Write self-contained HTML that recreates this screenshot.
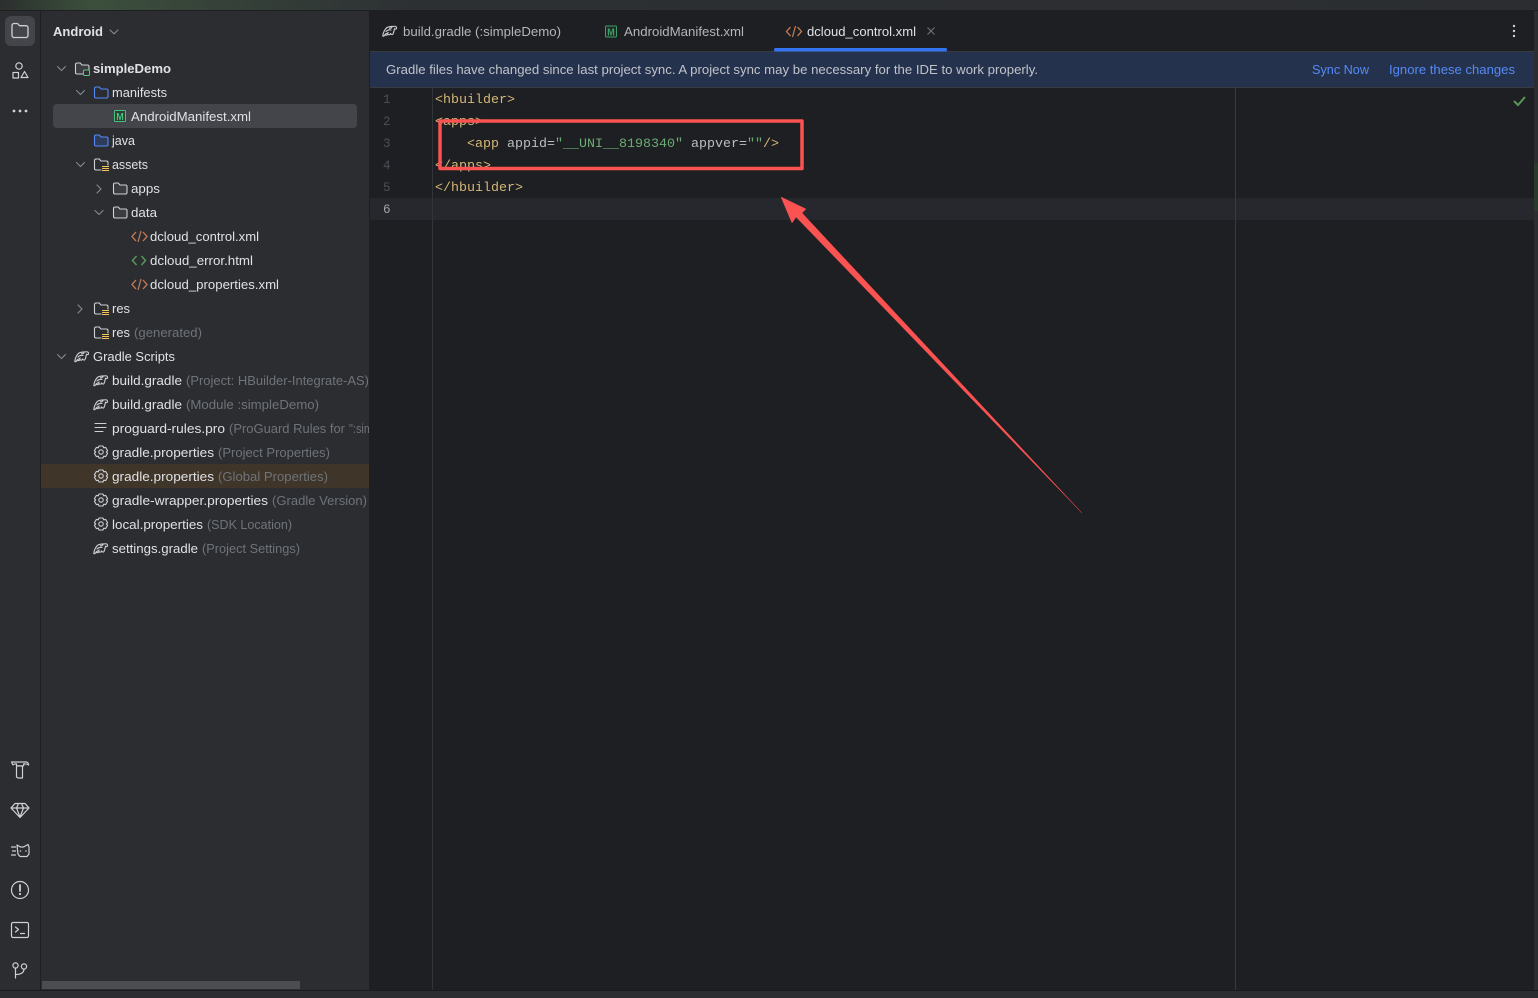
<!DOCTYPE html>
<html><head><meta charset="utf-8"><title>Android Studio</title>
<style>
html,body{margin:0;padding:0;background:#1e1f22;width:1538px;height:998px;overflow:hidden}
svg{display:block}
text{font-family:"Liberation Sans","Noto Sans CJK SC",sans-serif;font-size:13px;fill:#dfe1e5}
.g{fill:#6f737a}
.m{font-family:"Liberation Mono",monospace;font-size:13.33px}
.ic{fill:none;stroke:#ced0d6;stroke-width:1.1;stroke-linecap:round;stroke-linejoin:round}
.ln{fill:#4b5059;font-family:"Liberation Mono",monospace;font-size:12.5px}
.ch{fill:none;stroke:#868a91;stroke-width:1.1;stroke-linecap:round;stroke-linejoin:round}
</style></head><body>
<svg width="1538" height="998" viewBox="0 0 1538 998" xmlns="http://www.w3.org/2000/svg">
<defs>
<linearGradient id="top" x1="0" x2="1" y1="0" y2="0"><stop offset="0" stop-color="#2b2f2e"/><stop offset=".06" stop-color="#3c4f3c"/><stop offset=".14" stop-color="#364239"/><stop offset=".27" stop-color="#2d3033"/><stop offset="1" stop-color="#2b2d30"/></linearGradient>
<g id="fo"><path class="ic" style="stroke:#ced0d6;fill:#3a3c40" d="M.5 2.500a1.500 1.500 0 0 1 1.500-1.500h3.200l1.800 2h5.500a1.500 1.500 0 0 1 1.500 1.500v6a1.500 1.500 0 0 1-1.500 1.500H2a1.500 1.500 0 0 1-1.500-1.500z"/></g>
<g id="bf"><path style="fill:none;stroke:#548af7;stroke-width:1.1;stroke-linejoin:round" d="M.5 2.500a1.500 1.500 0 0 1 1.500-1.500h3.200l1.800 2h5.500a1.500 1.500 0 0 1 1.500 1.500v6a1.500 1.500 0 0 1-1.500 1.500H2a1.500 1.500 0 0 1-1.500-1.500z"/></g>
<g id="rf"><path class="ic" d="M7 12H2a1.500 1.500 0 0 1-1.500-1.500v-8A1.500 1.500 0 0 1 2 1h3.200l1.800 2h5.500A1.500 1.500 0 0 1 14 4.500V7"/><path d="M8 8.500h7M8 10.500h7M8 12.500h7" stroke="#f2c55c" stroke-width="1" fill="none"/></g>
<g id="el"><path class="ic" d="M.8 10.500C1 7 3 3.500 5 2 7 .8 10 1 12 .8c1.500-.2 2.800.4 2.500 2-.3 1-1.500 1-2 .4-.5 1.800-.5 3.300-1.500 5.300-.6 1-2 .5-2.300-.5-.7 1.500-2.200 1.500-2.700.5-.8 1.500-2.500 1.500-3 .5-.5 1.500-1.500 2-2.200 1.500z"/><path class="ic" d="M4 6c1.500-1.500 3-2 5-1.500M10 1.500c-.5 1-1.500 1.500-2.500 1.200M3.500 8.500c1-.3 2-.8 2.700-1.500"/></g>
<g id="ge"><circle class="ic" cx="7" cy="6.500" r="2.200"/><path class="ic" d="M5 .5h4l.7 1.800 1.900-.4 2 3.300-1.300 1.300 1.300 1.300-2 3.300-1.900-.4-.7 1.800H5l-.7-1.800-1.900.4-2-3.300L1.700 6.500.4 5.200l2-3.300 1.900.4z"/></g>
<g id="xml"><path d="M5 2.500 1 7l4 4.500M12 2.500 16 7l-4 4.500" fill="none" stroke="#c77d55" stroke-width="1.300"/><path d="M10 1.500 7 12.500" fill="none" stroke="#c77d55" stroke-width="1.200"/></g>
</defs>

<!-- base -->
<rect width="1538" height="998" fill="#1e1f22"/>
<rect width="1538" height="10" fill="url(#top)"/>
<rect y="10" width="1538" height="1" fill="#1e1f22"/>
<rect x="0" y="11" width="369" height="979" fill="#2b2d30"/>
<rect x="40" y="11" width="1" height="979" fill="#1e1f22"/>
<rect x="369" y="11" width="1" height="979" fill="#1e1f22"/>
<rect y="990" width="1538" height="8" fill="#2b2d30"/>
<rect y="990" width="1538" height="1" fill="#1a1b1e"/>
<rect x="1534" y="11" width="4" height="979" fill="#2b2d30"/>
<rect x="1534" y="163" width="4" height="48" fill="#2a3a2d"/>

<!-- left toolbar -->
<rect x="5" y="16" width="30" height="30" rx="6" fill="#43454a"/>
<path class="ic" style="stroke-width:1.300" d="M12 25.500a2 2 0 0 1 2-2h3.500l2 2.200h6.500a2 2 0 0 1 2 2v7.800a2 2 0 0 1-2 2H14a2 2 0 0 1-2-2z"/>
<circle class="ic" cx="19" cy="66" r="3.200" style="stroke-width:1.200"/>
<rect class="ic" x="13" y="72.500" width="5.500" height="5.500" style="stroke-width:1.200"/>
<path class="ic" style="stroke-width:1.200" d="M24.500 71.500l3.500 6h-7z"/>
<circle cx="14" cy="111" r="1.400" fill="#ced0d6"/><circle cx="20" cy="111" r="1.400" fill="#ced0d6"/><circle cx="26" cy="111" r="1.400" fill="#ced0d6"/>
<path class="ic" style="stroke-width:1.200" d="M11.500 762H26.500c1.200.3 2 1.500 2.200 3-1.500-1-3-1.200-5-1.200v2H16.500v-2c-1.500 0-3 .3-3.500 1.200zM16.500 766h6v12h-4.500l-1.500-1z"/>
<path class="ic" style="stroke-width:1.200" d="M15 803.500h10l4 4.500-9 9.500-9-9.500zM11 808h18M16.500 808l3.500 9 3.500-9M16.500 808l2-4.500h3l2 4.500"/>
<path class="ic" style="stroke-width:1.200" d="M17 845l3.500 2h3l4.500-2.500 1 2.500v7l-2 2.500h-7l-2-2.500zM11.500 847h4M12.500 851h3M11.500 855h4"/>
<circle cx="20.500" cy="851" r=".8" fill="#ced0d6"/><circle cx="26" cy="851" r=".8" fill="#ced0d6"/>
<circle class="ic" cx="20" cy="890" r="8.500" style="stroke-width:1.200"/>
<path d="M20 885v6" stroke="#ced0d6" stroke-width="1.800" stroke-linecap="round"/><circle cx="20" cy="894" r="1.100" fill="#ced0d6"/>
<rect class="ic" x="11.500" y="922.500" width="17" height="15" rx="1.500" style="stroke-width:1.200"/>
<path class="ic" style="stroke-width:1.200" d="M15.500 927l3 2.500-3 2.500M20.500 933.500h4"/>
<circle class="ic" cx="15.500" cy="965.500" r="2.600" style="stroke-width:1.200"/><circle class="ic" cx="24" cy="966.500" r="2.600" style="stroke-width:1.200"/>
<path class="ic" style="stroke-width:1.200" d="M15.500 968v10M15.500 974.500c4 0 8.500-1 8.500-5.500"/>

<!-- project panel -->
<text x="53" y="36" style="font-weight:700" textLength="50" lengthAdjust="spacingAndGlyphs">Android</text>
<path class="ch" d="M110 30l4 3.800 4-3.800"/>
<rect x="53" y="104" width="304" height="24" rx="4" fill="#43454a"/>
<rect x="41" y="464" width="328" height="24" fill="#3f3528"/>

<!-- chevrons -->
<path class="ch" d="M57.500 66.500l4 4 4-4"/><path class="ch" d="M76.500 90.500l4 4 4-4"/><path class="ch" d="M76.500 162.500l4 4 4-4"/>
<path class="ch" d="M97 185l4 4-4 4"/><path class="ch" d="M95 210.500l4 4 4-4"/><path class="ch" d="M78 305l4 4-4 4"/><path class="ch" d="M57.500 354.500l4 4 4-4"/>

<!-- tree icons -->
<use href="#fo" x="75" y="62"/><rect x="83.500" y="70" width="6" height="5.500" rx="1" fill="#2b2d30" stroke="#57c77f" stroke-width="1"/>
<use href="#bf" x="94" y="86"/>
<rect x="114.500" y="110.500" width="11" height="11" rx="1" fill="#2e3e36" stroke="#46c27b" stroke-width="1"/>
<text x="116.300" y="120" style="font-size:10px;font-weight:700;fill:#46c27b" textLength="7.500" lengthAdjust="spacingAndGlyphs">M</text>
<path style="fill:#2e3b5b;stroke:#548af7;stroke-width:1.100;stroke-linejoin:round" d="M94.500 136.500a1.500 1.500 0 0 1 1.500-1.500h3.200l1.800 2h5.500a1.500 1.500 0 0 1 1.500 1.500v6a1.500 1.500 0 0 1-1.500 1.500H96a1.500 1.500 0 0 1-1.500-1.500z"/>
<use href="#rf" x="94" y="158"/>
<use href="#fo" x="113" y="182"/><use href="#fo" x="113" y="206"/>
<use href="#xml" x="131" y="229.500"/>
<path d="M136.500 256 132.500 260.500l4 4.500M141.500 256l4 4.500-4 4.500" fill="none" stroke="#57965c" stroke-width="1.500"/>
<use href="#xml" x="131" y="277.500"/>
<use href="#rf" x="94" y="302"/><use href="#rf" x="94" y="326"/>
<use href="#el" x="74" y="351"/><use href="#el" x="93" y="375"/><use href="#el" x="93" y="399"/>
<path class="ic" d="M95 423.500h11M95 427.500h11M95 431.500h8"/>
<use href="#ge" x="94" y="445.500"/><use href="#ge" x="94" y="469.500"/><use href="#ge" x="94" y="493.500"/><use href="#ge" x="94" y="517.500"/>
<use href="#el" x="93" y="543"/>

<!-- tree text -->
<text x="93" y="73" style="font-weight:700" textLength="78" lengthAdjust="spacingAndGlyphs">simpleDemo</text>
<text x="112" y="97" textLength="55" lengthAdjust="spacingAndGlyphs">manifests</text>
<text x="131" y="121" textLength="120" lengthAdjust="spacingAndGlyphs">AndroidManifest.xml</text>
<text x="112" y="145" textLength="23" lengthAdjust="spacingAndGlyphs">java</text>
<text x="112" y="169" textLength="36" lengthAdjust="spacingAndGlyphs">assets</text>
<text x="131" y="193" textLength="29" lengthAdjust="spacingAndGlyphs">apps</text>
<text x="131" y="217" textLength="26" lengthAdjust="spacingAndGlyphs">data</text>
<text x="150" y="241" textLength="109" lengthAdjust="spacingAndGlyphs">dcloud_control.xml</text>
<text x="150" y="265" textLength="103" lengthAdjust="spacingAndGlyphs">dcloud_error.html</text>
<text x="150" y="289" textLength="129" lengthAdjust="spacingAndGlyphs">dcloud_properties.xml</text>
<text x="112" y="313" textLength="18" lengthAdjust="spacingAndGlyphs">res</text>
<text x="112" y="337" textLength="18" lengthAdjust="spacingAndGlyphs">res</text>
<text x="134" y="337" class="g" textLength="68" lengthAdjust="spacingAndGlyphs">(generated)</text>
<text x="93" y="361" textLength="82" lengthAdjust="spacingAndGlyphs">Gradle Scripts</text>
<text x="112" y="385" textLength="70" lengthAdjust="spacingAndGlyphs">build.gradle</text>
<text x="186" y="385" class="g" textLength="183" lengthAdjust="spacingAndGlyphs">(Project: HBuilder-Integrate-AS)</text>
<text x="112" y="409" textLength="70" lengthAdjust="spacingAndGlyphs">build.gradle</text>
<text x="186" y="409" class="g" textLength="133" lengthAdjust="spacingAndGlyphs">(Module :simpleDemo)</text>
<text x="112" y="433" textLength="113" lengthAdjust="spacingAndGlyphs">proguard-rules.pro</text>
<text x="229" y="433" class="g" textLength="116" lengthAdjust="spacingAndGlyphs">(ProGuard Rules for</text>
<svg x="349" y="420" width="20" height="20"><text x="0" y="13" class="g" textLength="24" lengthAdjust="spacingAndGlyphs">":sim</text></svg>
<text x="112" y="457" textLength="102" lengthAdjust="spacingAndGlyphs">gradle.properties</text>
<text x="218" y="457" class="g" textLength="112" lengthAdjust="spacingAndGlyphs">(Project Properties)</text>
<text x="112" y="481" textLength="102" lengthAdjust="spacingAndGlyphs">gradle.properties</text>
<text x="218" y="481" class="g" textLength="110" lengthAdjust="spacingAndGlyphs">(Global Properties)</text>
<text x="112" y="505" textLength="156" lengthAdjust="spacingAndGlyphs">gradle-wrapper.properties</text>
<text x="272" y="505" class="g" textLength="95" lengthAdjust="spacingAndGlyphs">(Gradle Version)</text>
<text x="112" y="529" textLength="91" lengthAdjust="spacingAndGlyphs">local.properties</text>
<text x="207" y="529" class="g" textLength="85" lengthAdjust="spacingAndGlyphs">(SDK Location)</text>
<text x="112" y="553" textLength="86" lengthAdjust="spacingAndGlyphs">settings.gradle</text>
<text x="202" y="553" class="g" textLength="98" lengthAdjust="spacingAndGlyphs">(Project Settings)</text>

<!-- panel scrollbar -->
<rect x="42" y="981" width="258" height="8" fill="#4c4d50"/>

<!-- tabs -->
<rect x="370" y="51" width="1164" height="1" fill="#393b40"/>
<use href="#el" x="382" y="25.500"/>
<text x="403" y="36" style="fill:#b4b6bc" textLength="158" lengthAdjust="spacingAndGlyphs">build.gradle (:simpleDemo)</text>
<rect x="605.500" y="26" width="11" height="11" rx="1" fill="#1e2b25" stroke="#3f9e68" stroke-width="1"/>
<text x="607.300" y="35.500" style="font-size:10px;font-weight:700;fill:#3f9e68" textLength="7.500" lengthAdjust="spacingAndGlyphs">M</text>
<text x="624" y="36" style="fill:#b4b6bc" textLength="120" lengthAdjust="spacingAndGlyphs">AndroidManifest.xml</text>
<use href="#xml" x="785.500" y="24.500"/>
<text x="807" y="36" textLength="109" lengthAdjust="spacingAndGlyphs">dcloud_control.xml</text>
<path d="M927.500 27.500l7 7M934.500 27.500l-7 7" stroke="#6f737a" stroke-width="1.100"/>
<rect x="774" y="48" width="173" height="3.500" rx="1.500" fill="#3574f0"/>
<circle cx="1514" cy="26" r="1.200" fill="#ced0d6"/><circle cx="1514" cy="31" r="1.200" fill="#ced0d6"/><circle cx="1514" cy="36" r="1.200" fill="#ced0d6"/>

<!-- banner -->
<rect x="370" y="52" width="1164" height="35" fill="#25324d"/>
<rect x="370" y="87" width="1164" height="1" fill="#393b40"/>
<text x="386" y="74" style="fill:#c0c3ca" textLength="652" lengthAdjust="spacingAndGlyphs">Gradle files have changed since last project sync. A project sync may be necessary for the IDE to work properly.</text>
<text x="1312" y="74" style="fill:#548af7" textLength="57" lengthAdjust="spacingAndGlyphs">Sync Now</text>
<text x="1389" y="74" style="fill:#548af7" textLength="126" lengthAdjust="spacingAndGlyphs">Ignore these changes</text>

<!-- editor -->
<rect x="370" y="198" width="1164" height="22" fill="#26282e"/>
<rect x="432" y="88" width="1" height="902" fill="#313438"/>
<rect x="1235" y="88" width="1" height="902" fill="#393b40"/>
<text x="383" y="103" class="ln">1</text>
<text x="383" y="125" class="ln">2</text>
<text x="383" y="147" class="ln">3</text>
<text x="383" y="169" class="ln">4</text>
<text x="383" y="191" class="ln">5</text>
<text x="383" y="213" class="ln" style="fill:#a1a3ab">6</text>
<text x="435" y="103" class="m" style="fill:#d5b778">&lt;hbuilder&gt;</text>
<text x="435" y="125" class="m" style="fill:#d5b778">&lt;apps&gt;</text>
<text x="467" y="147" class="m" xml:space="preserve" style="fill:#d5b778">&lt;app <tspan fill="#bcbec4">appid=</tspan><tspan fill="#6aab73">"__UNI__8198340"</tspan> <tspan fill="#bcbec4">appver=</tspan><tspan fill="#6aab73">""</tspan>/&gt;</text>
<text x="435" y="169" class="m" style="fill:#d5b778">&lt;/apps&gt;</text>
<text x="435" y="191" class="m" style="fill:#d5b778">&lt;/hbuilder&gt;</text>
<path d="M1514 101l4 4 7-8" fill="none" stroke="#57965c" stroke-width="2"/>

<!-- annotations -->
<rect x="440" y="121" width="362" height="47.500" fill="none" stroke="#fb5252" stroke-width="3.500" stroke-linejoin="round"/>
<path d="M781 197l25 12-4 4L1082 513 796 217l-4 6z" fill="#fb5252" stroke="#fb5252" stroke-width=".4"/>
</svg>
</body></html>
